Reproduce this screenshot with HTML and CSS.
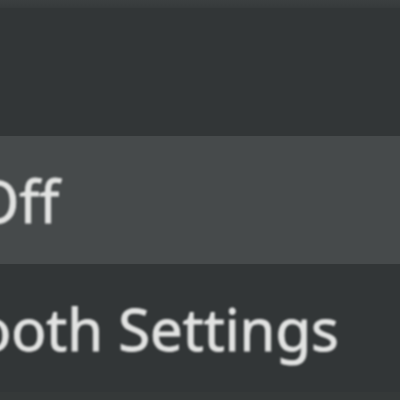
FILE: index.html
```html
<!DOCTYPE html>
<html lang="en">
<head>
    <meta charset="UTF-8">
    <title>Bluetooth</title>
    <link rel="stylesheet" href="styles.css">
</head>
<body>
<div class="menu">
    <div class="menu-top"></div>
    <div class="menu-item"></div>
    <div class="menu-item hover"><span class="label">Turn Off</span></div>
    <div class="menu-item"><span class="label">Bluetooth Settings</span></div>
    <div class="menu-bottom"></div>
</div>
</body>
</html>
```

FILE: styles.css
```css
* {
    margin: 0;
    padding: 0;
}

html, body {
    width: 400px;
    height: 400px;
    overflow: hidden;
}

body {
    background: #323637;
    font-family: "Noto Sans", "DejaVu Sans", sans-serif;
    color: #e2e3e2;
}

.menu {
    display: flex;
    flex-direction: column;
    margin-left: -166px;
    width: 600px;
}

.menu-top {
    height: 8px;
    background: linear-gradient(#3b3f40, #363a3b);
}

.menu-item {
    height: 128px;
    display: flex;
    align-items: center;
    font-size: 58px;
    white-space: nowrap;
}

.menu-item:first-of-type {
    height: 130px;
}

.menu-item.hover {
    background: #464a4b;
}

.label {
    -webkit-text-stroke: 0.9px #e2e3e2;
    filter: blur(0.9px);
}

.menu-bottom {
    height: 8px;
    background: #353939;
}
```
